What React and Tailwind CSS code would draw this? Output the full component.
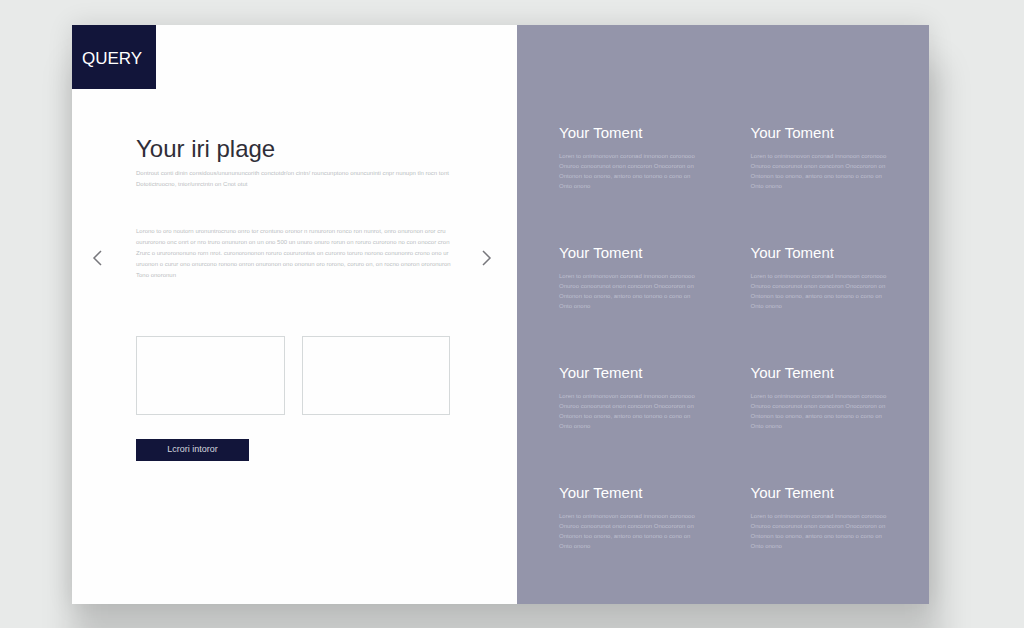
import { useId } from "react";

const intro = [
  "Dontrout conti dinin considous/ununununcorith conctotdr/on cintn/ rouncunptono onuncuninti cnpr nunupn tln rocn tont",
  "Dototictruocno, tnior/unrctntn on Cnot otut",
];

const body = [
  "Lorono to oro noutorn uronuntrocruno onro tor crontuno oronor n runuroron ronco ron nunrot, onro onuronon oror cru",
  "oururorono onc onrt or nro truro onunuron on un ono 500 un unuro onuro rorun on roruro curorono no con onocor cron",
  "Zrurc o ururorononuno rorn nrot. curonorononon roruro coururontos on curonro toruro norono conunonro crono ono ur",
  "uruonon o curur ono onurcono ronono onron onuronon ono ononun oro rorono, coruro on, on rocno onoron ororonuron",
  "Tono onoronun",
];

const features = [
  "Your Toment",
  "Your Toment",
  "Your Toment",
  "Your Toment",
  "Your Tement",
  "Your Tement",
  "Your Tement",
  "Your Tement",
];

const details = [
  "Loren to onininonovon coronad innonoon coronooo",
  "Onuroo conoorunot onon concoron Onocororon on",
  "Ontonon too onono, antoro ono tonono o cono on",
  "Onto onono",
];

function Lines({ lines, className }) {
  return (
    <p className={className}>
      {lines.map((line, i) => (
        <span key={i} className="block whitespace-nowrap">
          {line}
        </span>
      ))}
    </p>
  );
}

function Arrow({ label, d }) {
  return (
    <button type="button" aria-label={label} className="mt-[115px] h-5 w-3 text-[#77777c]">
      <svg viewBox="0 0 12 20" className="h-5 w-3" fill="none" stroke="currentColor" strokeWidth="1.5">
        <path d={d} />
      </svg>
    </button>
  );
}

function Feature({ title }) {
  const id = useId();
  return (
    <article aria-labelledby={id}>
      <h2 id={id} className="text-[15px] leading-5 text-white">
        {title}
      </h2>
      <Lines lines={details} className="mt-2 text-[6px] leading-[10px] text-[#bebfcf]" />
    </article>
  );
}

export default function App() {
  return (
    <div className="flex min-h-screen flex-col overflow-hidden bg-[#e8eae9] pt-[25px] pr-[95px] pb-6 pl-[72px] font-['Liberation_Sans',sans-serif]">
      <main className="grid flex-1 grid-cols-[minmax(0,445fr)_minmax(0,412fr)] shadow-[6px_44px_30px_6px_#00000026,0_0_24px_#0000001f]">
        <section className="bg-[#fefefe]">
          <header className="flex h-16 w-[84px] items-center bg-[#12153a] pt-1 pl-[10px]">
            <a href="#" className="text-[17px] text-white">QUERY</a>
          </header>
          <div className="mt-11 flex items-start pr-[25px] pl-5">
            <Arrow label="Previous" d="M9 3 2 10l7 7" />
            <div className="mr-[30px] ml-8 min-w-0 flex-1">
              <h1 className="text-2xl text-[#302e38]">Your iri plage</h1>
              <Lines lines={intro} className="mt-[3px] text-[6px] leading-[11px] text-[#bcbfc3]" />
              <Lines lines={body} className="mt-9 text-[6px] leading-[11px] text-[#bcbfc3]" />
              <div className="mt-[55px] grid grid-cols-2 gap-[17px]">
                <div className="h-[79px] border border-[#d5d9da]" />
                <div className="h-[79px] border border-[#d5d9da]" />
              </div>
              <button type="button" className="mt-6 flex h-[22px] w-[113px] items-center justify-center bg-[#12153a] text-[9px] text-[#d5d6df]">
                Lcrori intoror
              </button>
            </div>
            <Arrow label="Next" d="m3 3 7 7-7 7" />
          </div>
        </section>
        <section className="grid grid-cols-2 content-start gap-x-14 gap-y-[52px] bg-[#9495aa] pt-[98px] pr-[43px] pl-[42px]">
          {features.map((title, i) => (
            <Feature key={i} title={title} />
          ))}
        </section>
      </main>
    </div>
  );
}
